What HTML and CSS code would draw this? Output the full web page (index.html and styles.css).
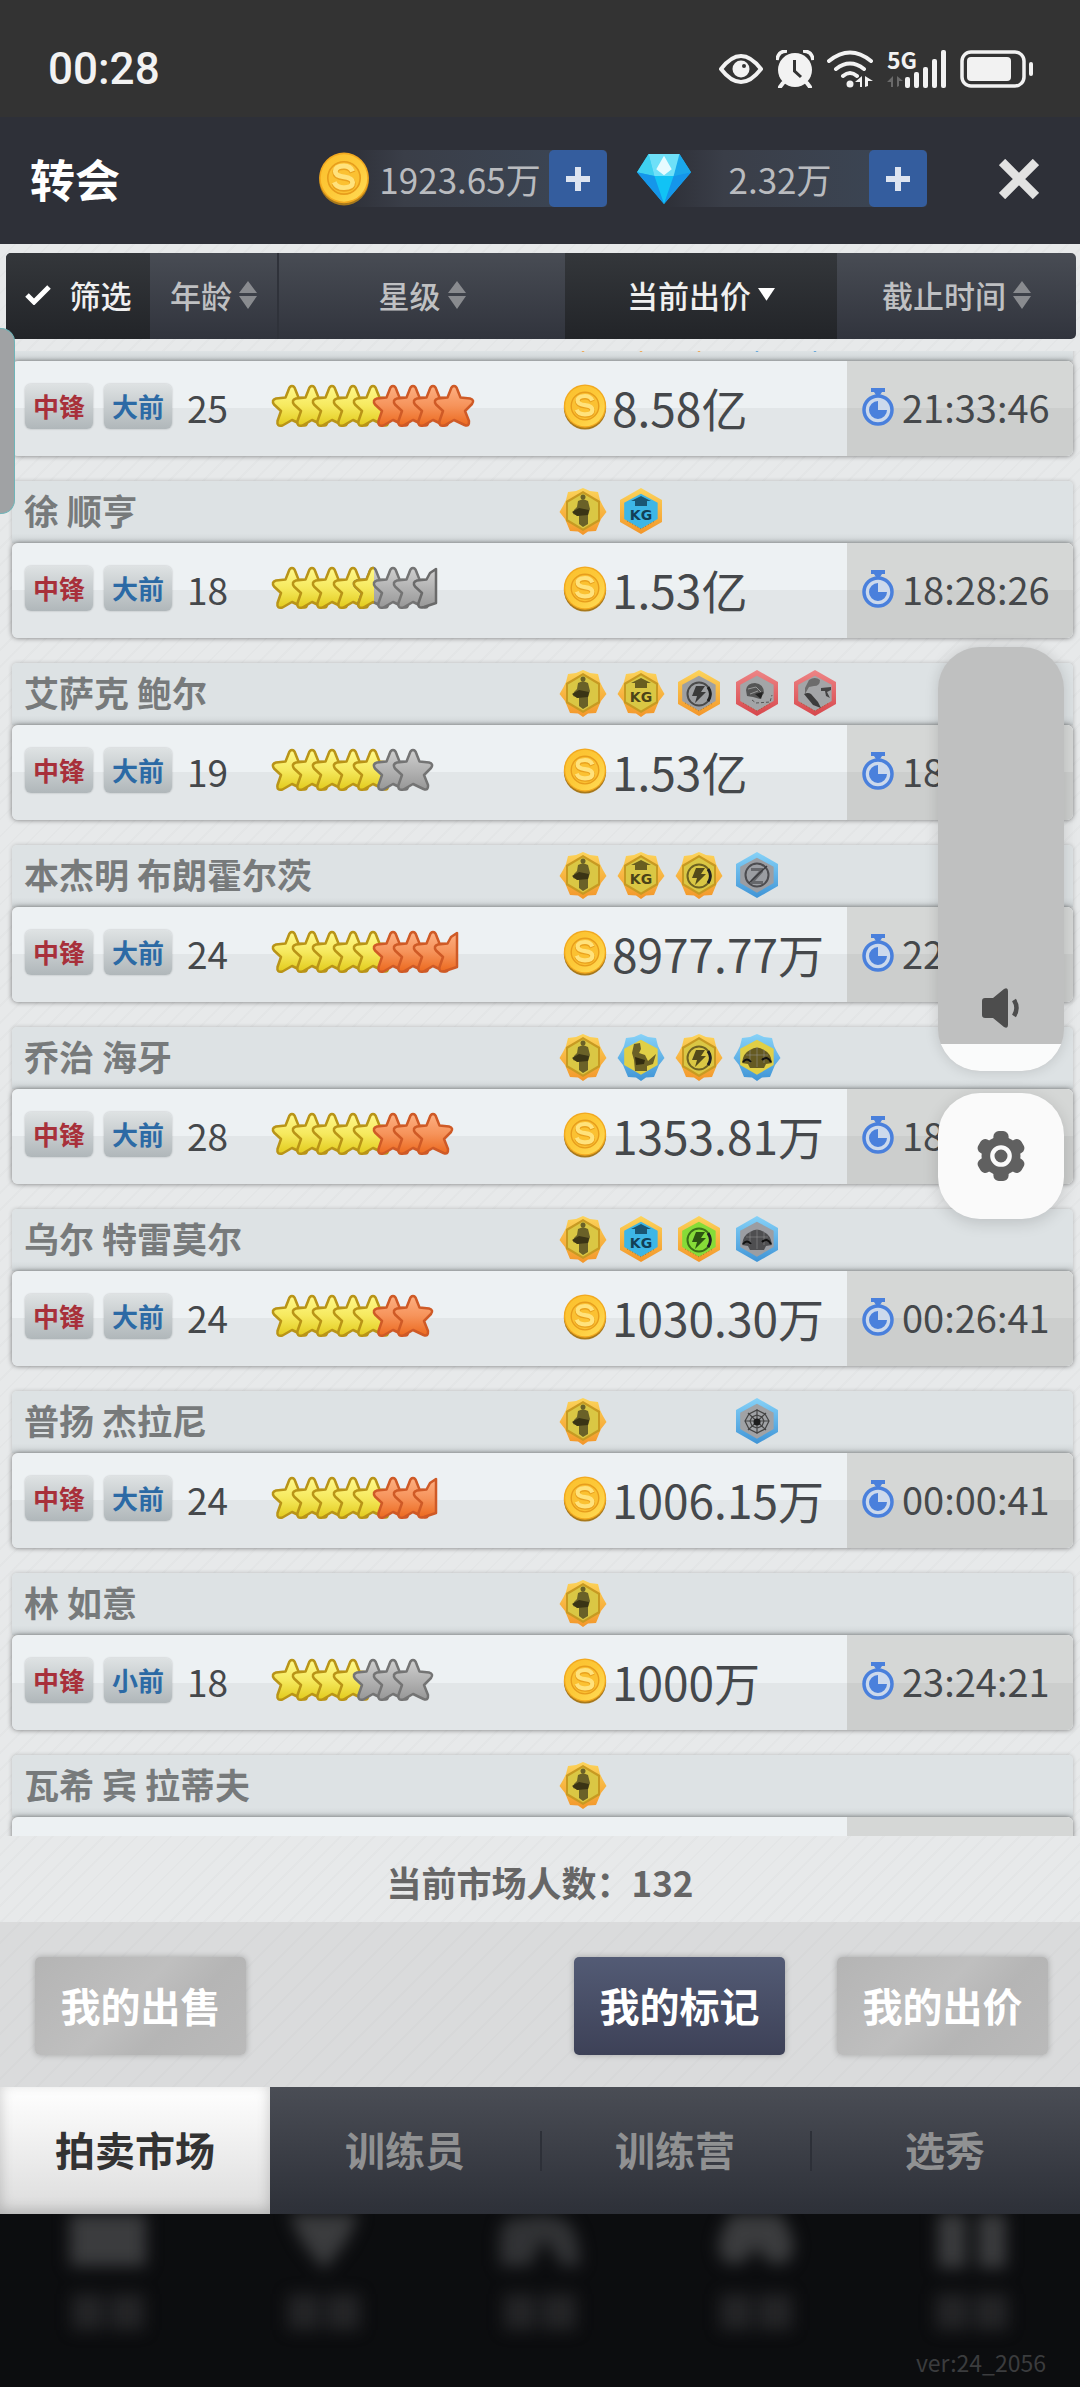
FILE: index.html
```html
<!DOCTYPE html>
<html lang="zh-CN">
  <head>
    <meta charset="utf-8" />
    <meta name="viewport" content="width=device-width, initial-scale=1" />
    <title>转会</title>
    <link rel="stylesheet" href="styles.css">
  </head>
  <body>
    <!-- shared icons -->
    <svg class="sprite" aria-hidden="true">
      <defs>
        <linearGradient id="fill-gold" x1="0" y1="0" x2="0" y2="1">
          <stop offset="0" stop-color="#fff98c" />
          <stop offset="0.5" stop-color="#f6e95e" />
          <stop offset="1" stop-color="#e2cb1c" />
        </linearGradient>
        <linearGradient id="fill-orange" x1="0" y1="0" x2="0" y2="1">
          <stop offset="0" stop-color="#fdb083" />
          <stop offset="0.5" stop-color="#f6935a" />
          <stop offset="1" stop-color="#ec691e" />
        </linearGradient>
        <linearGradient id="fill-grey" x1="0" y1="0" x2="0" y2="1">
          <stop offset="0" stop-color="#cfcfcf" />
          <stop offset="1" stop-color="#979797" />
        </linearGradient>
        <linearGradient id="fill-coin" x1="0" y1="0" x2="1" y2="1">
          <stop offset="0" stop-color="#fbc02e" />
          <stop offset="0.5" stop-color="#fdc938" />
          <stop offset="1" stop-color="#ffdc58" />
        </linearGradient>
        <linearGradient id="frame-orange" x1="0" y1="0" x2="0" y2="1">
          <stop offset="0" stop-color="#fcd45a" />
          <stop offset="1" stop-color="#f3962a" />
        </linearGradient>
        <linearGradient id="frame-blue" x1="0" y1="0" x2="0" y2="1">
          <stop offset="0" stop-color="#86d2f8" />
          <stop offset="1" stop-color="#3f94d6" />
        </linearGradient>
        <linearGradient id="frame-red" x1="0" y1="0" x2="0" y2="1">
          <stop offset="0" stop-color="#ee8586" />
          <stop offset="1" stop-color="#d7474c" />
        </linearGradient>
        <clipPath id="left-half"><path d="M0 0H22V44H0z" /></clipPath>
        <path id="star-shape" d="M21 2Q23.500 2 24.500 6L27.500 13.500L37 14.500Q42 16 39 20L32 27L36 37Q36.500 43 31.500 41L21 36L11.500 41.500Q5.500 43 6.500 37L10 27L3 20.500Q0 16 5 14.500L14.500 13.500L17.500 6Q18.500 2 21 2z" stroke-width="2.500" stroke-linejoin="round" />
        <path id="half-shape" d="M24 3V37L12 41Q5.500 43 6.500 37L10 27L3 20.500Q0 16 5 14.500L14.500 13.500L18 7z" stroke-width="2.500" stroke-linejoin="round" />
        <g id="gold"><use href="#star-shape" fill="url(#fill-gold)" stroke="#b99417" /></g>
        <g id="orange"><use href="#star-shape" fill="url(#fill-orange)" stroke="#cf5a26" /></g>
        <g id="grey"><use href="#star-shape" fill="url(#fill-grey)" stroke="#747474" /></g>
        <g id="half-orange"><use href="#half-shape" fill="url(#fill-orange)" stroke="#cf5a26" /></g>
        <g id="half-grey"><use href="#half-shape" fill="url(#fill-grey)" stroke="#6a6a6a" /></g>
        <g id="gold-4">
          <use href="#gold" /><use href="#gold" x="20" /><use href="#gold" x="40" /><use href="#gold" x="61" />
        </g>
        <g id="gold-5"><use href="#gold-4" /><use href="#gold" x="81" /></g>

        <path id="hex" d="M24 1L45 13V35L24 47L3 35V13z" />
        <path id="hex-inner" d="M24 8L39.500 16.500V31.500L24 40.500L8.500 31.500V16.500z" />
        <path id="burst" d="M24 1L31 4L39 5L41 13L44 19L47.500 25L42 32L37 44L29 44.500L24 48L19 44.500L11 44L6 32L0.500 25L4 19L7 13L9 5L17 4z" />
        <path id="rivets" d="M10 34L24 42L38 34" fill="none" stroke="#7a5a1c" stroke-opacity="0.6" stroke-dasharray="1 2" />
        <g id="gold-plate">
          <use href="#burst" fill="url(#frame-orange)" />
          <path d="M24 4L41 14V34L24 44L7 34V14z" fill="#c79a22" />
          <path d="M24 6.500L39 15.500V32.500L24 41.500L9 32.500V15.500z" fill="#dac744" />
        </g>
        <g id="player">
          <circle cx="24" cy="10" r="2.500" />
          <path d="M19 14L24 12L29 14L31 22L29 28L29 37L24 40L20 37V29L14 27L15 23L18 20z" />
          <path d="M13 25L20 21L30 23L29 28L18 29z" fill="#3a3415" />
        </g>
        <g id="kg">
          <path d="M24 9L34 14H30V19H18V14H14z" opacity="0.8" />
          <text x="24" y="33" text-anchor="middle" class="kg-text">KG</text>
        </g>
        <g id="bolt">
          <circle cx="24" cy="25" r="11.500" fill="none" stroke="currentColor" stroke-width="2" />
          <path d="M33 18A12 12 0 0 1 33 32" fill="none" stroke="#222" stroke-width="3" />
          <path d="M21 17H30L26 23H31L20 34L22 27H17z" />
        </g>
        <g id="crowd">
          <path d="M9 30Q10 20 17 17Q24 12 31 17Q38 20 39 30L33 31L31 35H17L15 31z" />
          <path d="M17 17V30M24 14V34M31 17V30M13 22H35" fill="none" stroke="#999" stroke-opacity="0.5" />
          <path d="M10 29Q14 24 18 29M29 27Q34 22 38 29" fill="none" stroke="#111" stroke-width="2" />
        </g>

        <symbol id="badge-player" viewBox="0 0 48 48">
          <use href="#gold-plate" /><use href="#player" fill="#6a6128" />
        </symbol>
        <symbol id="badge-kg-gold" viewBox="0 0 48 48">
          <use href="#gold-plate" /><use href="#kg" fill="#4c4418" />
        </symbol>
        <symbol id="badge-bolt-gold" viewBox="0 0 48 48">
          <use href="#gold-plate" /><use href="#bolt" fill="#544b1a" color="#6e6222" />
        </symbol>
        <symbol id="badge-muscle" viewBox="0 0 48 48">
          <use href="#burst" fill="url(#frame-blue)" /><use href="#hex-inner" fill="#e0cf46" transform="translate(-2 -2) scale(1.080)" />
          <path d="M17 11L23 10L24 16L22 20L28 22L31 28L39 21L36 31L30 33V38H18L17 27L15 20z" fill="#6b6126" />
          <path d="M18 24L28 27L27 31L19 32z" fill="#322c10" />
        </symbol>
        <symbol id="badge-crowd-gold" viewBox="0 0 48 48">
          <use href="#burst" fill="url(#frame-blue)" /><use href="#hex-inner" fill="#e0cf46" transform="translate(-2 -2) scale(1.080)" /><use href="#crowd" fill="#655a22" />
        </symbol>
        <symbol id="badge-kg-blue" viewBox="0 0 48 48">
          <use href="#hex" fill="url(#frame-orange)" /><use href="#hex-inner" fill="#3db6e6" transform="translate(-2 -2) scale(1.080)" />
          <use href="#rivets" /><use href="#kg" fill="#123f56" />
        </symbol>
        <symbol id="badge-bolt-grey" viewBox="0 0 48 48">
          <use href="#hex" fill="url(#frame-orange)" /><use href="#hex-inner" fill="#9d9fa2" transform="translate(-2 -2) scale(1.080)" />
          <use href="#rivets" /><use href="#bolt" fill="#3a3a3a" color="#4a4a4a" />
        </symbol>
        <symbol id="badge-bolt-green" viewBox="0 0 48 48">
          <use href="#hex" fill="url(#frame-orange)" /><use href="#hex-inner" fill="#86dc38" transform="translate(-2 -2) scale(1.080)" />
          <use href="#rivets" /><use href="#bolt" fill="#2c5412" color="#3b7018" />
        </symbol>
        <symbol id="badge-head" viewBox="0 0 48 48">
          <use href="#hex" fill="url(#frame-red)" /><use href="#hex-inner" fill="#a3a5a7" transform="translate(-2 -2) scale(1.080)" /><use href="#rivets" />
          <path d="M13 21Q14 14 22 14Q31 15 31 24L27 30L20 28L14 27z" fill="#555" />
          <path d="M15 20L23 18L28 23M17 25L25 22" fill="none" stroke="#999" />
          <path d="M22 25L30 23L28 30z" fill="#222" />
          <path d="M19 31L23 34L37 33L39 26" fill="none" stroke="#555" stroke-dasharray="3 2" />
        </symbol>
        <symbol id="badge-face" viewBox="0 0 48 48">
          <use href="#hex" fill="url(#frame-red)" /><use href="#hex-inner" fill="#a3a5a7" transform="translate(-2 -2) scale(1.080)" /><use href="#rivets" />
          <path d="M18 11Q24 7 29 11Q29 17 23 17L18 18L14 25L14 19z" fill="#6c6c6c" />
          <path d="M13 25Q17 23 20 25L27 33L30 39L22 36z" fill="#3c3c3c" />
          <path d="M30 19L40 18V21L36 23L39 29L35 27L34 22L30 22z" fill="#444" />
        </symbol>
        <symbol id="badge-z" viewBox="0 0 48 48">
          <use href="#hex" fill="url(#frame-blue)" /><use href="#hex-inner" fill="#9b9da2" transform="translate(-2 -2) scale(1.080)" />
          <circle cx="24" cy="24" r="11.500" fill="none" stroke="#4c4c50" stroke-width="2" />
          <path d="M18 17H30V21L22 30H30V33H18V29L26 20H18z" fill="#66676b" />
          <path d="M16 32L34 15" stroke="#3c3c40" stroke-width="1.500" />
        </symbol>
        <symbol id="badge-crowd-grey" viewBox="0 0 48 48">
          <use href="#hex" fill="url(#frame-blue)" /><use href="#hex-inner" fill="#9b9da2" transform="translate(-2 -2) scale(1.080)" /><use href="#crowd" fill="#4e4e50" />
        </symbol>
        <symbol id="badge-web" viewBox="0 0 48 48">
          <use href="#hex" fill="url(#frame-blue)" /><use href="#hex-inner" fill="#a0a2a5" transform="translate(-2 -2) scale(1.080)" />
          <path d="M24 12V37M12 24H36M15 16L33 33M33 16L15 33M24 13L32 17L36 24L32 32L24 36L16 32L12 24L16 17zM24 18L29 20L31 24L29 29L24 31L19 29L17 24L19 20z" fill="none" stroke="#444" stroke-width="1.200" />
          <circle cx="24" cy="25" r="3.500" fill="#1c1c1c" />
        </symbol>

        <symbol id="coin" viewBox="0 0 48 50">
          <ellipse cx="24" cy="26" rx="23" ry="23.500" fill="#a8791c" />
          <ellipse cx="24" cy="24" rx="23" ry="23.500" fill="#f2a91f" />
          <ellipse cx="24" cy="24" rx="21.500" ry="22" fill="url(#fill-coin)" />
          <circle cx="24" cy="24" r="15" fill="#fbc132" stroke="#e79d1c" stroke-width="1.500" />
          <path d="M32 19Q30 14 24 14Q16 14 16 19Q16 23 24 24Q32 25 32 29Q32 34 24 34Q17 34 15 29" fill="none" stroke="#e9a11e" stroke-width="5.500" />
          <path d="M32 18Q30 13 24 13Q16 13 16 18Q16 22 24 23Q32 24 32 28Q32 33 24 33Q17 33 15 28" fill="none" stroke="#ffe27c" stroke-width="4.500" />
        </symbol>
        <symbol id="timer" viewBox="0 0 32 38">
          <path d="M9 0H23V4H20L18 7H14L12 4H9z" fill="#4a80dc" />
          <circle cx="16" cy="22" r="14" fill="#ccd9ec" stroke="#4a80dc" stroke-width="3.500" />
          <path d="M16 22V13A9 9 0 1 0 25 22z" fill="#4a80dc" />
        </symbol>
        <symbol id="sort" viewBox="0 0 18 28">
          <path d="M9 0L18 12H0zM9 28L0 15H18z" />
        </symbol>
      </defs>
    </svg>

    <div class="status-bar">
      <span class="clock">00:28</span>
      <div class="status-icons">
        <svg width="44" height="30" viewBox="0 0 44 30" fill="none" stroke="#f2f2f2">
          <path d="M2 15Q22 -11 42 15Q22 41 2 15z" stroke-width="4" stroke-linejoin="round" />
          <circle cx="22" cy="15" r="8.500" fill="#f2f2f2" stroke="none" />
          <circle cx="25" cy="12" r="2" fill="#333" stroke="none" />
        </svg>
        <svg width="38" height="38" viewBox="0 0 38 38" fill="#f2f2f2">
          <circle cx="19" cy="20" r="17" />
          <path d="M1 10Q2 1 11 1M37 10Q36 1 27 1" fill="none" stroke="#f2f2f2" stroke-width="3.500" />
          <path d="M7 33L4 37M31 33L34 37" stroke="#f2f2f2" stroke-width="4" stroke-linecap="round" />
          <path d="M18.500 10V21L25 27" fill="none" stroke="#333" stroke-width="3" />
        </svg>
        <svg width="47" height="38" viewBox="0 0 47 38" fill="none" stroke="#f2f2f2" stroke-width="4" stroke-linecap="round">
          <path d="M2 11Q23 -6 44 11M9 19Q23 8 37 19M16 26Q23 20 30 26" />
          <circle cx="23" cy="34" r="3.500" fill="#f2f2f2" stroke="none" />
          <path d="M35 26V37H33V32H28zM38 26L46 31H41V36L38 37z" fill="#f2f2f2" stroke="none" />
        </svg>
        <svg width="60" height="38" viewBox="0 0 60 38" fill="#f2f2f2">
          <text x="0" y="19" class="net-text">5G</text>
          <path d="M6 26V37H4V32H0zM10 26L16 31H12V36L10 37z" fill="#6a6a6a" />
          <rect x="18" y="27" width="5" height="11" rx="2" />
          <rect x="27" y="22" width="5" height="16" rx="2" />
          <rect x="36" y="17" width="5" height="21" rx="2" />
          <rect x="45" y="9" width="5" height="29" rx="2" />
          <rect x="54" y="0" width="5" height="38" rx="2" />
        </svg>
        <svg width="74" height="38" viewBox="0 0 74 38" fill="#f2f2f2">
          <rect x="2" y="2" width="62" height="34" rx="9" fill="none" stroke="#f2f2f2" stroke-width="3.500" />
          <rect x="7" y="7" width="44" height="24" rx="4" />
          <rect x="69" y="12" width="4" height="14" rx="2" />
        </svg>
      </div>
    </div>

    <header class="title-bar">
      <h1>转会</h1>
      <div class="wallet">
        <svg class="wallet-icon" viewBox="0 0 48 50"><use href="#coin" /></svg>
        <span>1923.65万</span>
        <button class="add" aria-label="充值金币"><svg viewBox="0 0 24 24"><path d="M12 0V24M0 12H24" /></svg></button>
      </div>
      <div class="wallet">
        <svg class="wallet-icon" viewBox="0 0 56 52">
          <path d="M12 0H44L56 19L28 52L0 19z" fill="#12b9f2" />
          <path d="M12 0L18 23L0 19z" fill="#3fd2f0" />
          <path d="M44 0L38 23L56 19z" fill="#1ba7ea" />
          <path d="M12 0H44L38 23H18z" fill="#6fe0f8" />
          <path d="M28 2L36 16L28 22L20 16z" fill="#e6fbff" />
          <path d="M18 23H38L28 52z" fill="#11c3f5" />
          <path d="M0 19L18 23L28 52zM56 19L38 23L28 52z" fill="#1596ea" />
        </svg>
        <span>2.32万</span>
        <button class="add" aria-label="充值钻石"><svg viewBox="0 0 24 24"><path d="M12 0V24M0 12H24" /></svg></button>
      </div>
      <button class="close" aria-label="关闭"><svg viewBox="0 0 40 40"><path d="M3 3L37 37M37 3L3 37" /></svg></button>
    </header>

    <main class="market">
      <div class="filters">
        <button class="filter dark">
          <svg class="check" viewBox="0 0 26 20"><path d="M2 10L9 17L24 2" /></svg>筛选
        </button>
        <button class="filter">年龄<svg class="sort"><use href="#sort" /></svg></button>
        <button class="filter">星级<svg class="sort"><use href="#sort" /></svg></button>
        <button class="filter dark">当前出价<svg class="arrow" viewBox="0 0 16 12"><path d="M0 0H16L8 12z" /></svg></button>
        <button class="filter">截止时间<svg class="sort"><use href="#sort" /></svg></button>
      </div>

      <ul class="players">
        <li class="card">
          <div class="card-head">
            <span class="name"></span>
            <div class="badges">
              <svg><use href="#badge-kg-blue" /></svg>
              <svg><use href="#badge-kg-blue" /></svg>
              <svg><use href="#badge-bolt-grey" /></svg>
              <svg><use href="#badge-crowd-grey" /></svg>
              <svg><use href="#badge-web" /></svg>
            </div>
          </div>
          <div class="card-body">
            <div class="profile"><span class="tag red">中锋</span><span class="tag blue">大前</span><span class="age">25</span></div>
            <svg class="stars" viewBox="0 0 210 44">
              <use href="#gold-5" /><use href="#orange" x="101" /><use href="#orange" x="121" /><use href="#orange" x="141" /><use href="#orange" x="162" />
            </svg>
            <div class="price"><svg><use href="#coin" /></svg>8.58亿</div>
            <div class="time"><svg><use href="#timer" /></svg>21:33:46</div>
          </div>
        </li>
        <li class="card">
          <div class="card-head">
            <span class="name">徐 顺亨</span>
            <div class="badges">
              <svg><use href="#badge-player" /></svg>
              <svg><use href="#badge-kg-blue" /></svg>
            </div>
          </div>
          <div class="card-body">
            <div class="profile"><span class="tag red">中锋</span><span class="tag blue">大前</span><span class="age">18</span></div>
            <svg class="stars" viewBox="0 0 210 44">
              <use href="#gold-4" /><use href="#grey" x="81" /><g transform="translate(81)"><g clip-path="url(#left-half)"><use href="#gold" /></g></g>
              <use href="#grey" x="101" /><use href="#grey" x="121" /><use href="#half-grey" x="141" />
            </svg>
            <div class="price"><svg><use href="#coin" /></svg>1.53亿</div>
            <div class="time"><svg><use href="#timer" /></svg>18:28:26</div>
          </div>
        </li>
        <li class="card">
          <div class="card-head">
            <span class="name">艾萨克 鲍尔</span>
            <div class="badges">
              <svg><use href="#badge-player" /></svg>
              <svg><use href="#badge-kg-gold" /></svg>
              <svg><use href="#badge-bolt-grey" /></svg>
              <svg><use href="#badge-head" /></svg>
              <svg><use href="#badge-face" /></svg>
            </div>
          </div>
          <div class="card-body">
            <div class="profile"><span class="tag red">中锋</span><span class="tag blue">大前</span><span class="age">19</span></div>
            <svg class="stars" viewBox="0 0 210 44">
              <use href="#gold-5" /><use href="#grey" x="101" /><use href="#grey" x="121" />
            </svg>
            <div class="price"><svg><use href="#coin" /></svg>1.53亿</div>
            <div class="time"><svg><use href="#timer" /></svg>18</div>
          </div>
        </li>
        <li class="card">
          <div class="card-head">
            <span class="name">本杰明 布朗霍尔茨</span>
            <div class="badges">
              <svg><use href="#badge-player" /></svg>
              <svg><use href="#badge-kg-gold" /></svg>
              <svg><use href="#badge-bolt-gold" /></svg>
              <svg><use href="#badge-z" /></svg>
            </div>
          </div>
          <div class="card-body">
            <div class="profile"><span class="tag red">中锋</span><span class="tag blue">大前</span><span class="age">24</span></div>
            <svg class="stars" viewBox="0 0 210 44">
              <use href="#gold-5" /><use href="#orange" x="101" /><use href="#orange" x="121" /><use href="#orange" x="141" /><use href="#half-orange" x="162" />
            </svg>
            <div class="price"><svg><use href="#coin" /></svg>8977.77万</div>
            <div class="time"><svg><use href="#timer" /></svg>22</div>
          </div>
        </li>
        <li class="card">
          <div class="card-head">
            <span class="name">乔治 海牙</span>
            <div class="badges">
              <svg><use href="#badge-player" /></svg>
              <svg><use href="#badge-muscle" /></svg>
              <svg><use href="#badge-bolt-gold" /></svg>
              <svg><use href="#badge-crowd-gold" /></svg>
            </div>
          </div>
          <div class="card-body">
            <div class="profile"><span class="tag red">中锋</span><span class="tag blue">大前</span><span class="age">28</span></div>
            <svg class="stars" viewBox="0 0 210 44">
              <use href="#gold-5" /><use href="#orange" x="101" /><use href="#orange" x="121" /><use href="#orange" x="141" />
            </svg>
            <div class="price"><svg><use href="#coin" /></svg>1353.81万</div>
            <div class="time"><svg><use href="#timer" /></svg>18</div>
          </div>
        </li>
        <li class="card">
          <div class="card-head">
            <span class="name">乌尔 特雷莫尔</span>
            <div class="badges">
              <svg><use href="#badge-player" /></svg>
              <svg><use href="#badge-kg-blue" /></svg>
              <svg><use href="#badge-bolt-green" /></svg>
              <svg><use href="#badge-crowd-grey" /></svg>
            </div>
          </div>
          <div class="card-body">
            <div class="profile"><span class="tag red">中锋</span><span class="tag blue">大前</span><span class="age">24</span></div>
            <svg class="stars" viewBox="0 0 210 44">
              <use href="#gold-5" /><use href="#orange" x="101" /><use href="#orange" x="121" />
            </svg>
            <div class="price"><svg><use href="#coin" /></svg>1030.30万</div>
            <div class="time"><svg><use href="#timer" /></svg>00:26:41</div>
          </div>
        </li>
        <li class="card">
          <div class="card-head">
            <span class="name">普扬 杰拉尼</span>
            <div class="badges">
              <svg><use href="#badge-player" /></svg>
              <svg></svg>
              <svg></svg>
              <svg><use href="#badge-web" /></svg>
            </div>
          </div>
          <div class="card-body">
            <div class="profile"><span class="tag red">中锋</span><span class="tag blue">大前</span><span class="age">24</span></div>
            <svg class="stars" viewBox="0 0 210 44">
              <use href="#gold-5" /><use href="#orange" x="101" /><use href="#orange" x="121" /><use href="#half-orange" x="141" />
            </svg>
            <div class="price"><svg><use href="#coin" /></svg>1006.15万</div>
            <div class="time"><svg><use href="#timer" /></svg>00:00:41</div>
          </div>
        </li>
        <li class="card">
          <div class="card-head">
            <span class="name">林 如意</span>
            <div class="badges">
              <svg><use href="#badge-player" /></svg>
            </div>
          </div>
          <div class="card-body">
            <div class="profile"><span class="tag red">中锋</span><span class="tag blue">小前</span><span class="age">18</span></div>
            <svg class="stars" viewBox="0 0 210 44">
              <use href="#gold-4" /><use href="#grey" x="81" /><use href="#grey" x="101" /><use href="#grey" x="121" />
            </svg>
            <div class="price"><svg><use href="#coin" /></svg>1000万</div>
            <div class="time"><svg><use href="#timer" /></svg>23:24:21</div>
          </div>
        </li>
        <li class="card">
          <div class="card-head">
            <span class="name">瓦希 宾 拉蒂夫</span>
            <div class="badges">
              <svg><use href="#badge-player" /></svg>
            </div>
          </div>
          <div class="card-body">
            <div class="profile"></div>
            <div></div>
            <div></div>
            <div class="time"></div>
          </div>
        </li>
      </ul>

      <p class="count">当前市场人数：132</p>
    </main>

    <div class="actions">
      <button class="action">我的出售</button>
      <button class="action primary">我的标记</button>
      <button class="action">我的出价</button>
    </div>

    <nav class="tabs">
      <a href="#market" class="tab active">拍卖市场</a>
      <a href="#trainer" class="tab">训练员</a>
      <a href="#camp" class="tab">训练营</a>
      <a href="#draft" class="tab">选秀</a>
    </nav>

    <footer class="backdrop">
      <!-- menu of the screen below, out of focus -->
      <div class="ghosts" aria-hidden="true">
        <svg viewBox="0 0 80 130"><path d="M2 -20H78V52H2z" /><path d="M4 80H36V116H4zM42 80H76V116H42z" opacity="0.5" /></svg>
        <svg viewBox="0 0 80 130"><path d="M0 -10H80L62 28L40 56L18 28z" /><path d="M4 80H36V116H4zM42 80H76V116H42z" opacity="0.5" /></svg>
        <svg viewBox="0 0 80 130"><path d="M0 52V20Q4 0 24 4L40 0L60 4Q80 10 80 52H62L44 24L30 52z" opacity="0.8" /><path d="M4 80H36V116H4zM42 80H76V116H42z" opacity="0.5" /></svg>
        <svg viewBox="0 0 80 130"><path d="M20 -10H60L76 22Q82 52 58 50Q44 44 40 30Q36 44 22 50Q-2 52 4 22z" /><path d="M4 80H36V116H4zM42 80H76V116H42z" opacity="0.5" /></svg>
        <svg viewBox="0 0 80 130"><path d="M6 -20H34V54H6zM46 -20H74V54H46z" /><path d="M4 80H36V116H4zM42 80H76V116H42z" opacity="0.5" /></svg>
      </div>
      <span class="version">ver:24_2056</span>
    </footer>

    <div class="edge-handle"></div>

    <div class="volume">
      <div class="volume-slider">
        <svg viewBox="0 0 38 40" fill="#4d4d4d"><path d="M0 13Q0 10 3 10H11L22 1Q26 -1 26 3V37Q26 41 22 39L11 30H3Q0 30 0 27z" /><path d="M32 12Q37 20 32 28" fill="none" stroke="#4d4d4d" stroke-width="4.500" /></svg>
        <div class="volume-level"></div>
      </div>
      <button class="volume-settings" aria-label="设置">
        <svg viewBox="0 0 48 48">
          <g fill="#606060">
            <circle cx="24" cy="24" r="18" />
            <rect id="tooth" x="17" y="1" width="14" height="46" rx="5" />
            <use href="#tooth" transform="rotate(60 24 24)" />
            <use href="#tooth" transform="rotate(120 24 24)" />
          </g>
          <circle cx="24" cy="24" r="8" fill="#606060" stroke="#fafafa" stroke-width="4" />
        </svg>
      </button>
    </div>
  </body>
</html>
```
FILE: styles.css
```css
* {
  box-sizing: border-box;
}

html,
body {
  padding: 0;
  margin: 0;
  height: 100%;
}

body {
  display: flex;
  flex-direction: column;
  position: relative;
  overflow: hidden;
  background-color: #e7e9ea;
  font-family: "Noto Sans CJK SC", sans-serif;
}

button {
  border: 0;
  padding: 0;
  background: none;
  font-family: inherit;
  cursor: pointer;
}

svg {
  display: block;
  flex: none;
}

.sprite {
  position: absolute;
  width: 0;
  height: 0;
}

.kg-text {
  font: bold 14px "DejaVu Sans", sans-serif;
}

.net-text {
  font: bold 23px "Noto Sans CJK SC", sans-serif;
}

/* status bar */

.status-bar {
  flex: none;
  display: flex;
  align-items: center;
  justify-content: space-between;
  height: 117px;
  padding: 20px 46px 0 48px;
  background-color: #333;
}

.clock {
  color: #f2f2f2;
  font: 500 44px Roboto, sans-serif;
}

.status-icons {
  display: flex;
  align-items: center;
  gap: 13px;
}

/* title bar */

.title-bar {
  flex: none;
  display: flex;
  align-items: center;
  height: 127px;
  padding: 0 41px 4px 30px;
  background-color: #2e3038;
}

.title-bar h1 {
  margin: 0 auto 0 0;
  color: #fff;
  font-size: 45px;
  line-height: 60px;
}

.wallet {
  display: flex;
  align-items: center;
  width: 290px;
  height: 57px;
  border-radius: 4px;
  background: linear-gradient(to right, transparent 10%, #3a3e48 30%, #3b4452 80%);
  color: #b9bbbf;
  font-size: 35px;
}

.wallet + .wallet {
  margin-left: 30px;
}

.wallet span {
  flex: 1;
  text-align: center;
  white-space: nowrap;
}

.wallet-icon {
  width: 54px;
  height: 54px;
}

.add {
  width: 58px;
  height: 57px;
  border-radius: 5px;
  background-color: #345d9e;
}

.add svg {
  width: 24px;
  margin: auto;
  stroke: #dde4f0;
  stroke-width: 6;
}

.close {
  margin-left: 72px;
}

.close svg {
  width: 40px;
  stroke: #e2e2e2;
  stroke-width: 9;
}

/* market list */

.market {
  flex: 1;
  min-height: 0;
  display: flex;
  flex-direction: column;
  background:
    repeating-linear-gradient(135deg, transparent 0 10px, rgba(0, 0, 0, 0.015) 10px 12px),
    #e7e9ea;
}

.filters {
  flex: none;
  display: grid;
  grid-template-columns: 144fr 127fr 288fr 272fr 239fr;
  height: 86px;
  margin: 9px 4px 12px 6px;
  border-radius: 5px;
  overflow: hidden;
  background: linear-gradient(#484c54, #31343d);
}

.filter {
  display: flex;
  align-items: center;
  justify-content: center;
  gap: 7px;
  padding-bottom: 3px;
  border-left: 2px solid #2f323a;
  color: #bfc0c2;
  font-size: 31px;
  font-weight: 500;
}

.filter.dark {
  border-left: 0;
  background: linear-gradient(#34373b, #222428);
  color: #f0f0f0;
}

.filter.dark + .filter {
  border-left: 0;
}

.check {
  width: 26px;
  margin-right: 12px;
  fill: none;
  stroke: #fff;
  stroke-width: 5;
}

.sort {
  width: 18px;
  height: 28px;
  fill: #898b8f;
}

.arrow {
  width: 17px;
  fill: #fff;
}

.players {
  flex: 1;
  min-height: 0;
  overflow: hidden;
  margin: 0;
  padding: 0 7px 0 12px;
  list-style: none;
}

.card {
  margin-bottom: 25px;
}

/* the list is scrolled past the first name */
.card:first-child {
  margin-top: -52px;
}

.card-head {
  display: grid;
  grid-template-columns: 547fr 514fr;
  align-items: center;
  height: 62px;
  padding-bottom: 2px;
  border-radius: 5px 5px 0 0;
  background: linear-gradient(#dde2e4 85%, #ced3d5);
  box-shadow: 0 0 4px rgba(0, 0, 0, 0.2);
}

.name {
  padding: 0 0 2px 12px;
  color: #777a7b;
  font-size: 35px;
  font-weight: bold;
  line-height: 48px;
}

.badges {
  display: flex;
  gap: 10px;
}

.badges svg {
  width: 48px;
  height: 48px;
}

.card-body {
  position: relative;
  display: grid;
  grid-template-columns: 259fr 293fr 283fr 226fr;
  height: 95px;
  border-radius: 6px;
  background: linear-gradient(#edf1f3 50%, #e2e6e8 50%);
  box-shadow: 0 0 5px rgba(0, 0, 0, 0.5);
  color: #45484b;
}

.profile,
.price,
.time {
  display: flex;
  align-items: center;
  padding-bottom: 4px;
  white-space: nowrap;
}

.profile {
  gap: 11px;
  padding-left: 13px;
}

.tag {
  width: 68px;
  height: 45px;
  border-radius: 6px;
  background: linear-gradient(#dee2e3, #b0b7ba);
  box-shadow: 0 0 2px rgba(0, 0, 0, 0.25);
  font-size: 26px;
  font-weight: bold;
  line-height: 44px;
  text-align: center;
}

.red {
  color: #a8303a;
}

.blue {
  color: #2c6aa5;
}

.age {
  padding-left: 4px;
  font-size: 37px;
}

.stars {
  width: 210px;
  height: 44px;
  margin-top: 23px;
}

.price {
  gap: 4px;
  font-size: 46px;
}

.price svg {
  width: 46px;
  height: 46px;
  margin-left: -2px;
}

.time {
  gap: 8px;
  padding-left: 15px;
  border-radius: 0 6px 6px 0;
  background: linear-gradient(#d5d7d6 50%, #cccecd 50%);
  font-size: 38px;
}

.time svg {
  width: 32px;
  height: 38px;
}

.count {
  flex: none;
  margin: 0;
  height: 86px;
  color: #666;
  font-size: 35px;
  font-weight: bold;
  line-height: 92px;
  text-align: center;
}

/* bottom controls */

.actions {
  flex: none;
  display: flex;
  align-items: center;
  gap: 52px;
  height: 165px;
  padding: 2px 32px 0 35px;
  background:
    repeating-linear-gradient(135deg, transparent 0 14px, rgba(0, 0, 0, 0.015) 14px 16px),
    #dadbdc;
}

.action {
  width: 211px;
  height: 98px;
  padding-bottom: 2px;
  border-radius: 5px;
  background: linear-gradient(135deg, #b4b4b4, #bfbfbf 45%, #b5b5b5 65%, #bababa);
  box-shadow: 0 0 6px rgba(0, 0, 0, 0.25);
  color: #fff;
  font-size: 40px;
  font-weight: bold;
}

.action:first-child {
  margin-right: auto;
}

.action.primary {
  background: linear-gradient(#535b75, #3d4157);
}

.tabs {
  flex: none;
  display: grid;
  grid-template-columns: repeat(4, 1fr);
  height: 127px;
  background: linear-gradient(#4a4d55, #2d3038);
}

.tab {
  display: flex;
  align-items: center;
  justify-content: center;
  padding-bottom: 4px;
  color: #909192;
  font-size: 40px;
  font-weight: bold;
  text-decoration: none;
}

.tab + .tab + .tab {
  background: linear-gradient(#2d3038, #2d3038) left center / 2px 40px no-repeat;
}

.tab.active {
  background: linear-gradient(#fff, #dcdcdc);
  box-shadow: inset 0 -4px 14px rgba(0, 0, 0, 0.2);
  color: #333;
}

.backdrop {
  flex: none;
  position: relative;
  height: 173px;
  overflow: hidden;
  background-color: #0c0d0f;
}

.ghosts {
  display: grid;
  grid-template-columns: repeat(5, 1fr);
  justify-items: center;
  filter: blur(8px);
}

.ghosts svg {
  width: 80px;
  height: 130px;
  fill: #3b3c3e;
}

.version {
  position: absolute;
  right: 34px;
  bottom: 8px;
  color: #3b3c3e;
  font-size: 23px;
}

/* system overlays */

.edge-handle {
  position: absolute;
  left: 0;
  top: 328px;
  width: 15px;
  height: 186px;
  border: 1px solid #6fb4b8;
  border-left: 0;
  border-radius: 0 14px 14px 0;
  background-color: #a0a2a4;
}

.volume {
  position: absolute;
  right: 16px;
  top: 647px;
  display: flex;
  flex-direction: column;
  gap: 22px;
  width: 126px;
}

.volume-slider {
  display: flex;
  flex-direction: column;
  justify-content: flex-end;
  align-items: center;
  height: 424px;
  border-radius: 42px;
  overflow: hidden;
  background-color: #bfc0c0;
  box-shadow: 0 0 14px rgba(0, 0, 0, 0.15);
}

.volume-slider svg {
  width: 38px;
  height: 40px;
  margin-bottom: 16px;
}

.volume-level {
  width: 100%;
  height: 27px;
  background-color: #fafbfb;
}

.volume-settings {
  height: 126px;
  border-radius: 42px;
  background-color: #fafafa;
  box-shadow: 0 4px 16px rgba(0, 0, 0, 0.15);
}

.volume-settings svg {
  width: 52px;
  height: 52px;
  margin: auto;
}
```
